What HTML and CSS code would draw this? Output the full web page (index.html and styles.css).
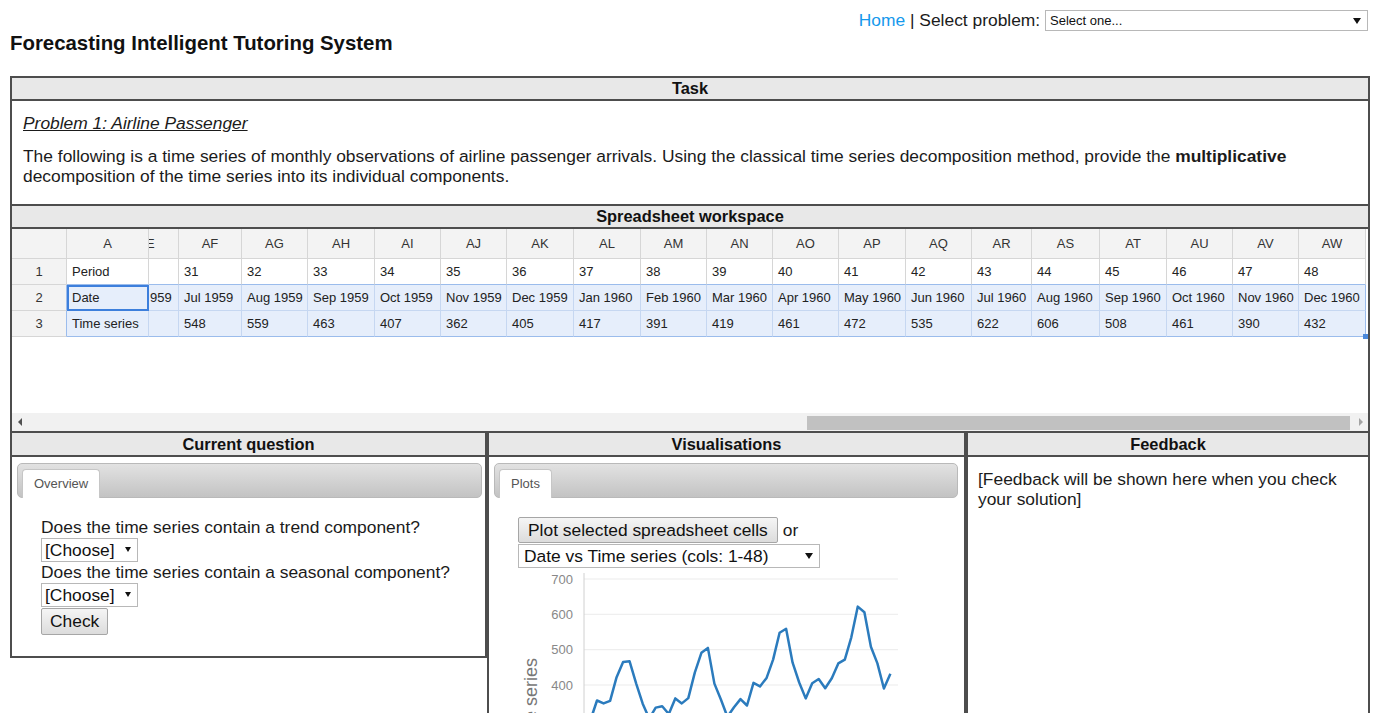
FILE: index.html
```html
<!DOCTYPE html>
<html lang="en">
<head>
<meta charset="utf-8">
<title>Forecasting Intelligent Tutoring System</title>
<link rel="stylesheet" href="styles.css">
</head>
<body>
<header class="topbar">
  <a class="home" href="#">Home</a> | Select problem: <span class="select select-problem"><select><option>Select one...</option></select></span>
</header>
<h1 class="title">Forecasting Intelligent Tutoring System</h1>

<main class="workspace">
  <section class="task">
    <div class="bar">Task</div>
    <div class="task-body">
      <p class="problem">Problem 1: Airline Passenger</p>
      <p>The following is a time series of monthly observations of airline passenger arrivals. Using the classical time series decomposition method, provide the <b>multiplicative</b> decomposition of the time series into its individual components.</p>
    </div>
  </section>

  <section class="sheet">
    <div class="bar bar-split">Spreadsheet workspace</div>
    <div class="grid-wrap">
      <div class="grid">
        <!-- column headers -->
        <div class="cell hd"></div>
        <div class="cell hd">A</div>
        <div class="cell hd clip"><span class="shift-h">AE</span></div>
        <div class="cell hd">AF</div><div class="cell hd">AG</div><div class="cell hd">AH</div><div class="cell hd">AI</div><div class="cell hd">AJ</div><div class="cell hd">AK</div><div class="cell hd">AL</div><div class="cell hd">AM</div><div class="cell hd">AN</div><div class="cell hd">AO</div><div class="cell hd">AP</div><div class="cell hd">AQ</div><div class="cell hd">AR</div><div class="cell hd">AS</div><div class="cell hd">AT</div><div class="cell hd">AU</div><div class="cell hd">AV</div><div class="cell hd">AW</div>

        <!-- row 1: period -->
        <div class="cell hd">1</div>
        <div class="cell top">Period</div>
        <div class="cell top part"></div>
        <div class="cell top">31</div><div class="cell top">32</div><div class="cell top">33</div><div class="cell top">34</div><div class="cell top">35</div><div class="cell top">36</div><div class="cell top">37</div><div class="cell top">38</div><div class="cell top">39</div><div class="cell top">40</div><div class="cell top">41</div><div class="cell top">42</div><div class="cell top">43</div><div class="cell top">44</div><div class="cell top">45</div><div class="cell top">46</div><div class="cell top">47</div><div class="cell top">48</div>

        <!-- row 2: date -->
        <div class="cell hd edge">2</div>
        <div class="cell sel active">Date</div>
        <div class="cell sel part">959</div>
        <div class="cell sel">Jul 1959</div><div class="cell sel">Aug 1959</div><div class="cell sel">Sep 1959</div><div class="cell sel">Oct 1959</div><div class="cell sel">Nov 1959</div><div class="cell sel">Dec 1959</div><div class="cell sel">Jan 1960</div><div class="cell sel">Feb 1960</div><div class="cell sel">Mar 1960</div><div class="cell sel">Apr 1960</div><div class="cell sel">May 1960</div><div class="cell sel">Jun 1960</div><div class="cell sel">Jul 1960</div><div class="cell sel">Aug 1960</div><div class="cell sel">Sep 1960</div><div class="cell sel">Oct 1960</div><div class="cell sel">Nov 1960</div><div class="cell sel last">Dec 1960</div>

        <!-- row 3: time series -->
        <div class="cell hd edge">3</div>
        <div class="cell sel bottom">Time series</div>
        <div class="cell sel bottom part"></div>
        <div class="cell sel bottom">548</div><div class="cell sel bottom">559</div><div class="cell sel bottom">463</div><div class="cell sel bottom">407</div><div class="cell sel bottom">362</div><div class="cell sel bottom">405</div><div class="cell sel bottom">417</div><div class="cell sel bottom">391</div><div class="cell sel bottom">419</div><div class="cell sel bottom">461</div><div class="cell sel bottom">472</div><div class="cell sel bottom">535</div><div class="cell sel bottom">622</div><div class="cell sel bottom">606</div><div class="cell sel bottom">508</div><div class="cell sel bottom">461</div><div class="cell sel bottom">390</div><div class="cell sel bottom last handle">432</div>
      </div>
    </div>
    <div class="hscroll">
      <span class="arrow arrow-l"></span>
      <div class="track"><div class="thumb"></div></div>
      <span class="arrow arrow-r"></span>
    </div>
  </section>
</main>

<div class="panels">
  <section class="box cq">
    <div class="bar panel-bar">Current question</div>
    <div class="cq-body">
      <div class="tabs"><span class="tab">Overview</span></div>
      <div class="content">
        <p class="q">Does the time series contain a trend component?</p>
        <span class="select choose"><select><option>[Choose]</option></select></span>
        <p class="q">Does the time series contain a seasonal component?</p>
        <span class="select choose"><select><option>[Choose]</option></select></span>
        <button class="btn check" type="button">Check</button>
      </div>
    </div>
  </section>

  <section class="box vis">
    <div class="bar panel-bar">Visualisations</div>
    <div class="vis-body">
      <div class="tabs tabs-vis"><span class="tab">Plots</span></div>
      <div class="content">
        <div class="plot-row"><button class="btn plot" type="button">Plot selected spreadsheet cells</button><span>or</span></div>
        <span class="select series"><select><option>Date vs Time series (cols: 1-48)</option></select></span>
      </div>
      <svg class="chart" width="476" height="200" viewBox="0 0 476 200">
        <g class="gridlines">
          <line x1="95" y1="11" x2="409" y2="11"/>
          <line x1="95" y1="46.3" x2="409" y2="46.3"/>
          <line x1="95" y1="81.7" x2="409" y2="81.7"/>
          <line x1="95" y1="117" x2="409" y2="117"/>
          <line x1="95" y1="152.3" x2="409" y2="152.3"/>
        </g>
        <line class="axis" x1="95" y1="5" x2="95" y2="200"/>
        <g class="ticks">
          <text x="84" y="15.6">700</text>
          <text x="84" y="50.9">600</text>
          <text x="84" y="86.3">500</text>
          <text x="84" y="121.6">400</text>
          <text x="84" y="156.9">300</text>
        </g>
        <text class="axis-title" transform="translate(48,90) rotate(-90)">Time series</text>
        <polyline class="series-line" points="95,147 101.5,152 108,132.5 114.6,135.4 121.1,132.9 127.6,109.2 134.1,94 140.6,93.3 147.2,115.6 153.7,135.7 160.2,150.6 166.7,139.6 173.2,138.2 179.8,146 186.3,130.4 192.8,135.4 199.3,130.1 205.8,104.6 212.4,84.8 218.9,79.9 225.4,115.6 231.9,131.5 238.4,148.8 245,139.3 251.5,131.1 258,137.5 264.5,114.9 271,118.4 277.6,109.9 284.1,91.6 290.6,64.7 297.1,60.8 303.6,94.7 310.2,114.5 316.7,130.4 323.2,115.2 329.7,111 336.2,120.2 342.8,110.3 349.3,95.4 355.8,91.6 362.3,69.3 368.8,38.6 375.4,44.2 381.9,78.8 388.4,95.4 394.9,120.5 401.4,105.7"/>
      </svg>
    </div>
  </section>

  <section class="box fb">
    <div class="bar panel-bar">Feedback</div>
    <div class="fb-body">[Feedback will be shown here when you check your solution]</div>
  </section>
</div>
</body>
</html>
```

FILE: styles.css
```css
* { box-sizing: border-box; }

html, body { margin: 0; }

body {
  font-family: "Liberation Sans", Arial, sans-serif;
  font-size: 17.4px;
  color: #1b1b1b;
  background: #fff;
}

/* ---- top navigation ---- */
.topbar {
  height: 31px;
  padding: 10px 8px 0 0;
  text-align: right;
  line-height: 21px;
}

.home { color: #1599ec; text-decoration: none; }

.title {
  margin: 1px 0 0 10px;
  font-size: 20.4px;
  line-height: 23px;
  font-weight: bold;
  color: #111;
}

/* ---- custom selects ---- */
.select {
  position: relative;
  display: inline-block;
  vertical-align: top;
  text-align: left;
}

.select select {
  -webkit-appearance: none;
  appearance: none;
  display: block;
  width: 100%;
  height: 100%;
  margin: 0;
  padding: 0 0 0 4px;
  border: 1px solid #b8b8b8;
  border-radius: 0;
  background: #fff;
  font-family: inherit;
  color: #111;
}

.select::after {
  content: "";
  position: absolute;
  top: 50%;
  right: 7px;
  margin-top: -3px;
  border-left: 4px solid transparent;
  border-right: 4px solid transparent;
  border-top: 6px solid #111;
  pointer-events: none;
}

.select-problem { width: 323px; height: 21px; }
.select-problem select { font-size: 13px; }

.choose { display: block; width: 97px; height: 24px; }
.choose select { font-size: 17.4px; padding-left: 3px; }
.choose::after { border-left-width: 3px; border-right-width: 3px; border-top-width: 5px; right: 7px; }

.series { display: block; width: 302px; height: 24px; }
.series select { font-size: 17.4px; padding-left: 5px; }

/* ---- main workspace ---- */
.workspace {
  width: 1360px;
  margin: 21px 0 0 10px;
  border: 2px solid #4d4d4d;
}

.bar {
  height: 23px;
  line-height: 21px;
  background: #e8e8e8;
  border-bottom: 2px solid #4d4d4d;
  font-size: 16.4px;
  font-weight: bold;
  text-align: center;
  color: #111;
}

.bar-split { height: 25px; border-top: 2px solid #4d4d4d; }

.task-body {
  height: 103px;
  padding: 12px 11px 0;
}

.task-body p { margin: 0; line-height: 20px; }

.task-body .problem {
  margin-bottom: 13px;
  font-style: italic;
  text-decoration: underline;
}

/* ---- spreadsheet ---- */
.grid-wrap { height: 184px; overflow: hidden; }

.grid {
  display: grid;
  grid-template-columns: 55px 82px 30px 63px 66px 67px 66px 66px 67px 67px 66px 66px 66px 67px 66px 60px 68px 67px 66px 66px 67px;
  grid-template-rows: 30px 26px 26px 26px;
  font-size: 13px;
  color: #222;
}

.cell {
  display: flex;
  align-items: center;
  padding: 0 5px;
  white-space: nowrap;
  border-right: 1px solid #d6d6d6;
  border-bottom: 1px solid #d6d6d6;
  background: #fff;
}

.hd {
  justify-content: center;
  padding: 0;
  background: #f3f3f3;
  color: #333;
}

.hd.edge { border-right-color: #9bbcec; }

.top { border-bottom-color: #9bbcec; }

.sel {
  background: #e6eefb;
  border-right-color: #c6d7f1;
  border-bottom-color: #c6d7f1;
}

.sel.bottom { border-bottom-color: #9bbcec; }
.sel.last { border-right-color: #9bbcec; }

.active {
  outline: 2px solid #3d7fdc;
  outline-offset: -2px;
}

/* column scrolled partly out of view on its left side */
.part { padding-left: 1px; }
.clip { overflow: hidden; padding: 0; justify-content: flex-start; }
.shift-h { flex: none; width: 66px; margin-left: -36px; text-align: center; }

.handle { position: relative; }
.handle::after {
  content: "";
  position: absolute;
  right: -3px;
  bottom: -3px;
  width: 5px;
  height: 5px;
  background: #4b89dc;
}

/* ---- horizontal scrollbar ---- */
.hscroll {
  display: flex;
  height: 18px;
  background: #f1f1f1;
}

.arrow {
  display: flex;
  align-items: center;
  justify-content: center;
  width: 15px;
  height: 18px;
}

.arrow-l::before {
  content: "";
  border-top: 4px solid transparent;
  border-bottom: 4px solid transparent;
  border-right: 4px solid #505050;
}

.arrow-r::before {
  content: "";
  border-top: 4px solid transparent;
  border-bottom: 4px solid transparent;
  border-left: 4px solid #a3a3a3;
}

.track { flex: 1; padding-top: 3px; }
.thumb { width: 543px; height: 14px; margin-left: 780px; background: #c1c1c1; }

/* ---- bottom panels ---- */
.panels {
  display: flex;
  align-items: flex-start;
  width: 1360px;
  margin-left: 10px;
}

.box { border: 2px solid #4d4d4d; border-top: 0; }
.cq { width: 477px; }
.vis { width: 479px; }
.fb { width: 404px; }

.panel-bar { height: 24px; line-height: 22px; }

.cq-body { height: 199px; padding-top: 6px; }
.vis-body { height: 300px; padding-top: 6px; }

.tabs {
  display: flex;
  align-items: flex-end;
  height: 35px;
  margin: 0 3px 0 5px;
  padding: 0 0 0 4px;
  border: 1px solid #b9b9b9;
  border-radius: 5px;
  background: linear-gradient(#e2e2e2, #c3c3c3);
}

.tabs-vis { margin-right: 6px; }

.tab {
  height: 29px;
  margin-bottom: -1px;
  padding: 0 11px;
  line-height: 28px;
  font-size: 13px;
  color: #555;
  background: #fff;
  border: 1px solid #c6c6c6;
  border-bottom: 0;
  border-radius: 4px 4px 0 0;
}

.content { padding: 19px 0 0 29px; }

.q { margin: 0; line-height: 21px; }

.btn {
  display: block;
  font-family: inherit;
  font-size: 17.4px;
  color: #111;
  background: linear-gradient(#f5f5f5, #dcdcdc);
  border: 1px solid #a6a6a6;
  border-radius: 2px;
  margin: 0;
}

.check { height: 27px; padding: 0 8px; margin-top: 1px; }

.plot-row {
  display: flex;
  align-items: center;
  column-gap: 5px;
  margin-bottom: 1px;
}

.plot { height: 26px; padding: 0 9px; }

/* ---- chart ---- */
.chart { display: block; }
.gridlines line { stroke: #ebebeb; stroke-width: 1; }
.axis { stroke: #d0d0d0; stroke-width: 1; }
.ticks text { font-family: "Liberation Sans", Arial, sans-serif; font-size: 13px; fill: #888; text-anchor: end; }
.axis-title { font-family: "Liberation Sans", Arial, sans-serif; font-size: 18px; fill: #777; text-anchor: end; }
.series-line { fill: none; stroke: #2b7bbd; stroke-width: 2.5; stroke-linejoin: round; }

/* ---- feedback ---- */
.fb-body {
  height: 300px;
  padding: 12px 10px;
  line-height: 20px;
}
```
